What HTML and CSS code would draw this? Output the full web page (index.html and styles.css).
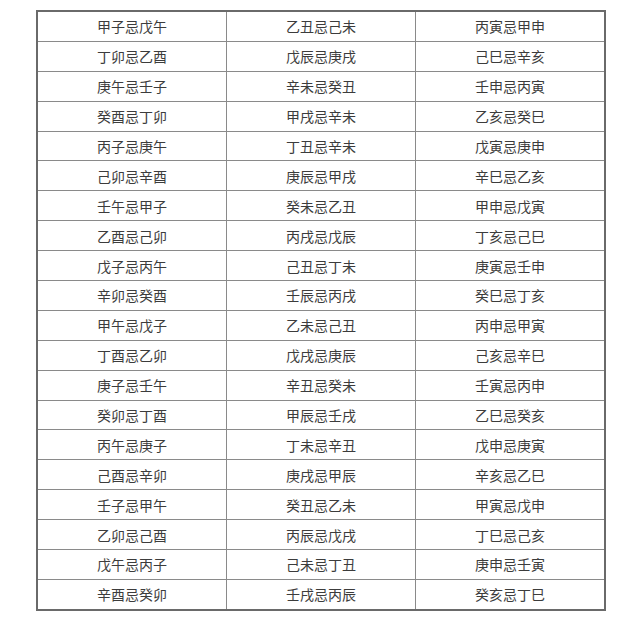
FILE: index.html
```html
<!DOCTYPE html>
<html lang="zh">
<head>
<meta charset="utf-8">
<title>忌日表</title>
<link rel="stylesheet" href="styles.css">
</head>
<body>
<table class="ji-table">
<tbody>
<tr><td>甲子忌戊午</td><td>乙丑忌己未</td><td>丙寅忌甲申</td></tr>
<tr><td>丁卯忌乙酉</td><td>戊辰忌庚戌</td><td>己巳忌辛亥</td></tr>
<tr><td>庚午忌壬子</td><td>辛未忌癸丑</td><td>壬申忌丙寅</td></tr>
<tr><td>癸酉忌丁卯</td><td>甲戌忌辛未</td><td>乙亥忌癸巳</td></tr>
<tr><td>丙子忌庚午</td><td>丁丑忌辛未</td><td>戊寅忌庚申</td></tr>
<tr><td>己卯忌辛酉</td><td>庚辰忌甲戌</td><td>辛巳忌乙亥</td></tr>
<tr><td>壬午忌甲子</td><td>癸未忌乙丑</td><td>甲申忌戊寅</td></tr>
<tr><td>乙酉忌己卯</td><td>丙戌忌戊辰</td><td>丁亥忌己巳</td></tr>
<tr><td>戊子忌丙午</td><td>己丑忌丁未</td><td>庚寅忌壬申</td></tr>
<tr><td>辛卯忌癸酉</td><td>壬辰忌丙戌</td><td>癸巳忌丁亥</td></tr>
<tr><td>甲午忌戊子</td><td>乙未忌己丑</td><td>丙申忌甲寅</td></tr>
<tr><td>丁酉忌乙卯</td><td>戊戌忌庚辰</td><td>己亥忌辛巳</td></tr>
<tr><td>庚子忌壬午</td><td>辛丑忌癸未</td><td>壬寅忌丙申</td></tr>
<tr><td>癸卯忌丁酉</td><td>甲辰忌壬戌</td><td>乙巳忌癸亥</td></tr>
<tr><td>丙午忌庚子</td><td>丁未忌辛丑</td><td>戊申忌庚寅</td></tr>
<tr><td>己酉忌辛卯</td><td>庚戌忌甲辰</td><td>辛亥忌乙巳</td></tr>
<tr><td>壬子忌甲午</td><td>癸丑忌乙未</td><td>甲寅忌戊申</td></tr>
<tr><td>乙卯忌己酉</td><td>丙辰忌戊戌</td><td>丁巳忌己亥</td></tr>
<tr><td>戊午忌丙子</td><td>己未忌丁丑</td><td>庚申忌壬寅</td></tr>
<tr><td>辛酉忌癸卯</td><td>壬戌忌丙辰</td><td>癸亥忌丁巳</td></tr>
</tbody>
</table>
</body>
</html>
```
FILE: styles.css
```css
html, body {
  margin: 0;
  padding: 0;
  background: #ffffff;
}
body {
  padding: 10px 0 0 36px;
  font-family: "Noto Sans CJK SC", "Noto Sans CJK TC", sans-serif;
}
.ji-table {
  border-collapse: collapse;
  border: 2px solid #6a6a6a;
  width: 570px;
  table-layout: fixed;
}
.ji-table td {
  width: 33.33%;
  height: 28.9px;
  padding: 0;
  border: 1px solid #8a8a8a;
  text-align: center;
  vertical-align: middle;
  font-size: 14px;
  line-height: 16px;
  color: #3c3c3c;
  font-weight: 400;
}
```
